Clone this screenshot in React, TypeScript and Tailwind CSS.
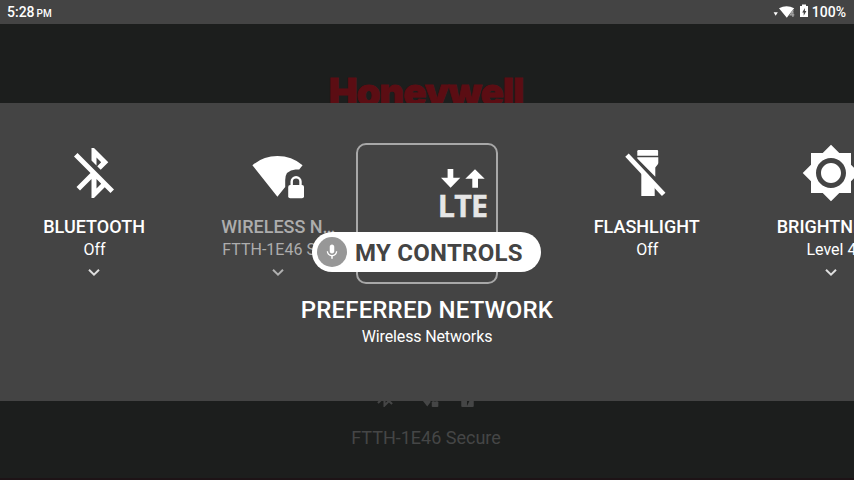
import type { ReactNode } from "react";

const BT_OFF =
  "M13 5.83l1.88 1.88-1.6 1.6 1.41 1.41 3.02-3.02L12 2h-1v5.03l2 2v-3.2zM5.41 4L4 5.41 10.59 12 5 17.59 6.41 19 11 14.41V22h1l4.29-4.29 2.3 2.29L20 18.59 5.41 4zM13 18.17v-3.76l1.88 1.88L13 18.17z";
const BRIGHTNESS =
  "M20 8.69V4h-4.69L12 .69 8.69 4H4v4.69L.69 12 4 15.31V20h4.69L12 23.31 15.31 20H20v-4.69L23.31 12 20 8.69zM12 18c-3.31 0-6-2.69-6-6s2.69-6 6-6 6 2.69 6 6-2.69 6-6 6zm0-10c-2.21 0-4 1.79-4 4s1.79 4 4 4 4-1.79 4-4-1.79-4-4-4z";

function Material({ d, className }: { d: string; className: string }) {
  return (
    <svg viewBox="0 0 24 24" className={className} fill="currentColor">
      <path d={d} />
    </svg>
  );
}

function WifiLock({ className }: { className: string }) {
  return (
    <svg viewBox="0 0 60 60" className={className}>
      <path
        fill="currentColor"
        d="M29.4 53.8L4.4 22.2Q15 13 29.4 13T54.6 22.2L51.2 26.6H47.5Q37.2 27.4 37.2 37V44z"
      />
      <rect x="40.2" y="42" width="15.8" height="13.3" rx="2" fill="currentColor" />
      <path d="M43.7 43v-4.4a4.4 4.4 0 0 1 8.8 0V43" fill="none" stroke="currentColor" strokeWidth="2.4" />
    </svg>
  );
}

function FlashlightOff() {
  return (
    <svg viewBox="0 0 60 60" className="h-[60px] w-[60px]" fill="currentColor">
      <path d="M21.5 7h18.6q1 0 1 1v4.7H20.3V8.2q0-1.2 1.2-1.2z" />
      <path d="M20.3 14.2h21v5.5q0 1-.8 2L38.3 24.5v9.3L20.3 15.4z" />
      <path d="M24.3 27l13.4 14V53H24.3z" />
      <path d="M10 12.2L46.7 51.4" fill="none" stroke="currentColor" strokeWidth="4.8" />
    </svg>
  );
}

function Lte() {
  return (
    <div className="flex h-[60px] flex-col items-center">
      <svg viewBox="0 0 44 19" className="mt-[26px] ml-px h-[19px] w-[44px] shrink-0" fill="currentColor">
        <path d="M6.6 0h5.7v8.7h7L9.6 18.7-.1 8.7h6.7z" />
        <path d="M34 .3l9.7 9.5H37v9h-5.7v-9h-7z" />
      </svg>
      <span className="-mt-px font-['Open_Sans'] text-[30.5px] leading-[36px] font-bold tracking-[-0.9px] text-[#e6e6e6] [-webkit-text-stroke:0.4px_#e6e6e6]">
        LTE
      </span>
    </div>
  );
}

function Chevron({ dim }: { dim?: boolean }) {
  return (
    <svg viewBox="0 0 12 8" className={dim ? "mt-[7px] h-2 w-3 text-[#b0b0b0]" : "mt-[7px] h-2 w-3 text-[#dedede]"}>
      <path d="M1 1.7l5 4.9 5-4.9" fill="none" stroke="currentColor" strokeWidth="2" />
    </svg>
  );
}

function Tile({
  icon,
  title,
  sub,
  chevron,
  dim,
}: {
  icon: ReactNode;
  title: string;
  sub: string;
  chevron?: boolean;
  dim?: boolean;
}) {
  return (
    <div className="flex min-w-0 flex-col items-center">
      <div className="h-[60px]">{icon}</div>
      <div
        className={
          dim
            ? "mt-3 w-[115px] text-center text-lg leading-6 font-medium whitespace-nowrap text-[#adadad]"
            : "mt-3 text-lg leading-6 font-medium whitespace-nowrap"
        }
      >
        {title}
      </div>
      <div
        className={
          dim
            ? "w-[112px] overflow-hidden text-base leading-[22px] whitespace-nowrap text-[#adadad]"
            : "pl-px text-base leading-[22px] whitespace-nowrap"
        }
      >
        {sub}
      </div>
      {chevron && <Chevron dim={dim} />}
    </div>
  );
}

function StatusBar() {
  return (
    <header className="flex h-6 items-center justify-between bg-[#444444] pr-2 pl-[7px]">
      <div className="flex items-baseline pt-px text-sm leading-6 font-medium">
        5:28<span className="ml-[2px] text-[10px]">PM</span>
      </div>
      <div className="flex items-center text-sm leading-6 font-medium">
        <svg viewBox="0 0 36 16" className="mr-[3px] h-4 w-9" fill="currentColor">
          <path d="M.6 8.3h4.2L2.7 11.8z" />
          <path d="M6 4.2Q13.6 .2 21.2 4.2L19.4 6.6 17 9.6 13.8 13.8z" />
          <path d="M20.3 6l-3 4.8h4M19.9 7.5V13" fill="none" stroke="#a8a8a8" strokeWidth="1.2" />
          <path d="M27 2h2V.4h4V2h2v11H27z" />
          <path d="M31.9 4l-2.7 4.6h1.5v3.2l2.7-4.7h-1.5z" fill="#444444" />
        </svg>
        <span>100%</span>
      </div>
    </header>
  );
}

export default function App() {
  return (
    <div className="flex h-[480px] w-[854px] flex-col overflow-hidden bg-[#1c1e1d] font-[Roboto,sans-serif] text-white">
      <StatusBar />

      <div className="flex h-[79px] justify-center overflow-hidden pr-[2px]">
        <div className="mt-[44px] font-[Inter,sans-serif] text-[38.5px] leading-[48px] font-black tracking-[-1.1px] text-[#5b0d13] [-webkit-text-stroke:0.8px_#5b0d13]">
          Honeywell
        </div>
      </div>

      <main className="relative h-[298px] shrink-0 overflow-hidden bg-[#444444] pt-10 pl-[2px]">
        <div className="grid w-[921px] grid-cols-5">
          <Tile icon={<Material d={BT_OFF} className="h-[60px] w-[60px]" />} title="BLUETOOTH" sub="Off" chevron />
          <Tile icon={<WifiLock className="h-[60px] w-[60px]" />} title="WIRELESS N…" sub="FTTH-1E46 Secure" chevron dim />
          <div className="flex flex-col items-center">
            <Lte />
          </div>
          <Tile icon={<FlashlightOff />} title="FLASHLIGHT" sub="Off" />
          <Tile icon={<Material d={BRIGHTNESS} className="h-[60px] w-[60px]" />} title="BRIGHTNESS" sub="Level 4" chevron />
        </div>

        {/* Selection frame, voice command pill and focused item's caption */}
        <div className="absolute top-10 left-[356px] h-[141px] w-[142px] rounded-[10px] border-2 border-[#a8a8a8]" />
        <div className="absolute top-[129px] left-[312px] flex h-10 w-[229px] items-center rounded-full bg-white pl-[5px] text-[#444444]">
          <div className="flex h-[30px] w-[30px] items-center justify-center rounded-full bg-[#979797]">
            <svg viewBox="0 0 24 24" className="h-[18px] w-[18px]" fill="white">
              <path d="M12 14c1.66 0 3-1.34 3-3V5c0-1.66-1.34-3-3-3S9 3.34 9 5v6c0 1.66 1.34 3 3 3zm5.3-3c0 3-2.54 5.1-5.3 5.1S6.7 14 6.7 11H5c0 3.41 2.72 6.23 6 6.72V21h2v-3.28c3.28-.48 6-3.3 6-6.72h-1.7z" />
            </svg>
          </div>
          <span className="ml-2 pt-[2px] text-2xl font-bold tracking-[0.26px] whitespace-nowrap">MY CONTROLS</span>
        </div>
        <div className="absolute inset-x-0 top-[191px] flex flex-col items-center">
          <div className="text-2xl leading-8 font-medium tracking-[0.15px]">PREFERRED NETWORK</div>
          <div className="text-base leading-[22px] tracking-[-0.13px]">Wireless Networks</div>
        </div>
      </main>

      <div className="flex min-h-0 flex-1 flex-col items-center overflow-hidden border-b-2 border-[#1d1316] text-[#454646]">
        <div className="-mt-[17px] flex h-6 gap-[18px] pr-[2px]">
          <Material d={BT_OFF} className="h-[25px] w-[25px]" />
          <WifiLock className="h-[25px] w-[25px]" />
          <svg viewBox="0 0 24 24" className="-ml-[3px] h-[25px] w-[25px]" fill="currentColor">
            <path d="M6 3h3V1h6v2h3v18q0 1-1 1H7q-1 0-1-1zM13 8l-3.5 8h2v5l4-8h-2z" fillRule="evenodd" />
          </svg>
        </div>
        <div className="mt-[18px] pr-[2px] text-lg leading-6">FTTH-1E46 Secure</div>
      </div>
    </div>
  );
}
